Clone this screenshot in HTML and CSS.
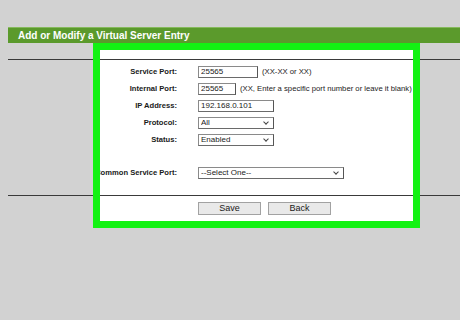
FILE: index.html
```html
<!DOCTYPE html>
<html lang="en">
<head>
    <meta charset="UTF-8">
    <title>Add or Modify a Virtual Server Entry</title>
    <link rel="stylesheet" href="styles.css">
</head>
<body>
    <div class="spot"></div>

    <div class="page">
        <div class="title-bar">Add or Modify a Virtual Server Entry</div>
        <div class="rule"></div>

        <div class="form">
            <div class="row">
                <label>Service Port:</label>
                <div class="field">
                    <input class="box w-service" type="text" value="25565">
                    <span class="hint">(XX-XX or XX)</span>
                </div>
            </div>
            <div class="row">
                <label>Internal Port:</label>
                <div class="field">
                    <input class="box w-internal" type="text" value="25565">
                    <span class="hint">(XX, Enter a specific port number or leave it blank)</span>
                </div>
            </div>
            <div class="row">
                <label>IP Address:</label>
                <div class="field">
                    <input class="box w-mid" type="text" value="192.168.0.101">
                </div>
            </div>
            <div class="row">
                <label>Protocol:</label>
                <div class="field">
                    <span class="pick w-mid">
                        <select class="box"><option>All</option></select>
                    </span>
                </div>
            </div>
            <div class="row">
                <label>Status:</label>
                <div class="field">
                    <span class="pick w-mid">
                        <select class="box"><option>Enabled</option></select>
                    </span>
                </div>
            </div>
            <div class="row row-gap">
                <label>Common Service Port:</label>
                <div class="field">
                    <span class="pick w-wide">
                        <select class="box"><option>--Select One--</option></select>
                    </span>
                </div>
            </div>
        </div>

        <div class="rule rule-bottom"></div>

        <div class="buttons">
            <button class="btn">Save</button>
            <button class="btn">Back</button>
        </div>
    </div>

    <div class="spot-frame"></div>
</body>
</html>
```

FILE: styles.css
```css
:root {
    --page-gray: #d2d2d2;
    --bar-green: #5b9a2c;
    --bar-edge: #86b95c;
    --spot-green: #13f213;
    --ink: #1a1a1a;
    --rule: #3a3a3a;
}

html, body {
    margin: 0;
    padding: 0;
}

body {
    width: 460px;
    height: 320px;
    overflow: hidden;
    position: relative;
    background: var(--page-gray);
    font-family: "Liberation Sans", Arial, sans-serif;
    color: var(--ink);
}

.page {
    position: relative;
    z-index: 1;
    padding: 27px 0 0 8px;
}

.title-bar {
    height: 15px;
    line-height: 15px;
    padding-left: 10px;
    background: var(--bar-green);
    border-top: 1px solid var(--bar-edge);
    color: #fff;
    font-size: 10px;
    font-weight: bold;
}

.rule {
    margin-top: 16px;
    border-top: 1px solid var(--rule);
}

.form {
    padding-top: 3px;
}

.row {
    display: grid;
    grid-template-columns: 169px 1fr;
    column-gap: 21px;
    align-items: center;
    height: 17px;
}

.row-gap {
    margin-top: 16px;
}

.row label {
    text-align: right;
    font-size: 7.6px;
    font-weight: bold;
    white-space: nowrap;
}

.field {
    display: flex;
    align-items: center;
    gap: 4px;
    height: 12px;
}

.box {
    box-sizing: border-box;
    height: 12px;
    margin: 0;
    padding: 0 0 0 2px;
    border: 1px solid #8a8a8a;
    border-right-color: #555;
    border-bottom-color: #6a6a6a;
    background: #fff;
    font-family: inherit;
    font-size: 8px;
    color: var(--ink);
    outline: none;
}

.w-service { width: 60px; }
.w-internal { width: 38px; }
.w-mid { width: 76px; }
.w-wide { width: 146px; }

.pick {
    position: relative;
    display: flex;
    height: 12px;
}

.pick select {
    width: 100%;
    appearance: none;
    -webkit-appearance: none;
    border-radius: 0;
}

.pick::after {
    content: "";
    position: absolute;
    right: 6px;
    top: 3px;
    width: 3px;
    height: 3px;
    border-right: 1px solid #444;
    border-bottom: 1px solid #444;
    transform: rotate(45deg);
    pointer-events: none;
}

.hint {
    font-size: 7.7px;
    white-space: nowrap;
}

.rule-bottom {
    margin-top: 14px;
}

.buttons {
    display: flex;
    gap: 7px;
    padding: 6px 0 0 190px;
}

.btn {
    box-sizing: border-box;
    width: 63px;
    height: 13px;
    margin: 0;
    padding: 0;
    border: 1px solid #a2a2a2;
    background: #e9e9e9;
    font-family: inherit;
    font-size: 9px;
    line-height: 11px;
    color: var(--ink);
}

/* highlighted region of the screenshot */
.spot,
.spot-frame {
    position: absolute;
    left: 93px;
    top: 43px;
    width: 327px;
    height: 185px;
    box-sizing: border-box;
}

.spot {
    z-index: 0;
    background: #fff;
}

.spot-frame {
    z-index: 2;
    border: 7px solid var(--spot-green);
    pointer-events: none;
}
```
